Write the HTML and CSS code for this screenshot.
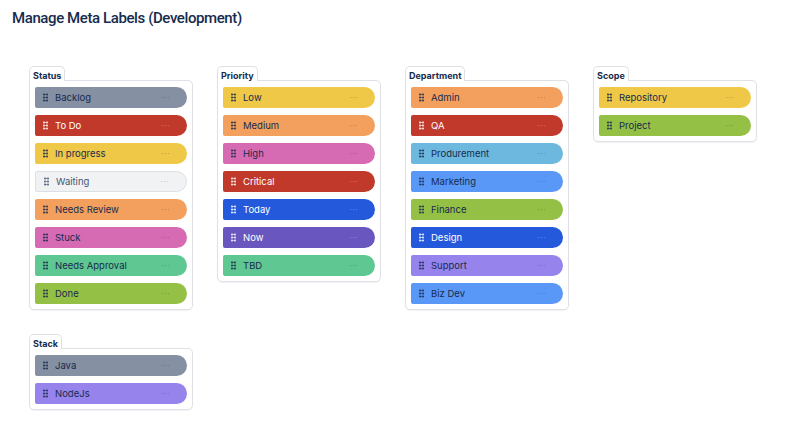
FILE: index.html
```html
<!DOCTYPE html>
<html lang="en">
<head>
  <meta charset="UTF-8">
  <meta name="viewport" content="width=device-width, initial-scale=1.0">
  <title>Manage Meta Labels</title>
  <link rel="stylesheet" href="styles.css">
</head>
<body>

<div class="page">
  <h1 class="page-title">Manage Meta Labels (Development)</h1>

  <div class="groups">

    <!-- Status -->
    <section class="group">
      <div class="group-tab">Status</div>
      <div class="group-card">
        <div class="label gray"><span class="grip"></span><span class="name">Backlog</span><span class="more">···</span></div>
        <div class="label red"><span class="grip"></span><span class="name">To Do</span><span class="more">···</span></div>
        <div class="label yellow"><span class="grip"></span><span class="name">In progress</span><span class="more">···</span></div>
        <div class="label light"><span class="grip"></span><span class="name">Waiting</span><span class="more">···</span></div>
        <div class="label orange"><span class="grip"></span><span class="name">Needs Review</span><span class="more">···</span></div>
        <div class="label magenta"><span class="grip"></span><span class="name">Stuck</span><span class="more">···</span></div>
        <div class="label green"><span class="grip"></span><span class="name">Needs Approval</span><span class="more">···</span></div>
        <div class="label lime"><span class="grip"></span><span class="name">Done</span><span class="more">···</span></div>
      </div>
    </section>

    <!-- Priority -->
    <section class="group">
      <div class="group-tab">Priority</div>
      <div class="group-card">
        <div class="label yellow"><span class="grip"></span><span class="name">Low</span><span class="more">···</span></div>
        <div class="label orange"><span class="grip"></span><span class="name">Medium</span><span class="more">···</span></div>
        <div class="label magenta"><span class="grip"></span><span class="name">High</span><span class="more">···</span></div>
        <div class="label red"><span class="grip"></span><span class="name">Critical</span><span class="more">···</span></div>
        <div class="label blue"><span class="grip"></span><span class="name">Today</span><span class="more">···</span></div>
        <div class="label purple"><span class="grip"></span><span class="name">Now</span><span class="more">···</span></div>
        <div class="label green"><span class="grip"></span><span class="name">TBD</span><span class="more">···</span></div>
      </div>
    </section>

    <!-- Department -->
    <section class="group">
      <div class="group-tab">Department</div>
      <div class="group-card">
        <div class="label orange"><span class="grip"></span><span class="name">Admin</span><span class="more">···</span></div>
        <div class="label red"><span class="grip"></span><span class="name">QA</span><span class="more">···</span></div>
        <div class="label teal"><span class="grip"></span><span class="name">Produrement</span><span class="more">···</span></div>
        <div class="label sky"><span class="grip"></span><span class="name">Marketing</span><span class="more">···</span></div>
        <div class="label lime"><span class="grip"></span><span class="name">Finance</span><span class="more">···</span></div>
        <div class="label blue"><span class="grip"></span><span class="name">Design</span><span class="more">···</span></div>
        <div class="label lavender"><span class="grip"></span><span class="name">Support</span><span class="more">···</span></div>
        <div class="label sky"><span class="grip"></span><span class="name">Biz Dev</span><span class="more">···</span></div>
      </div>
    </section>

    <!-- Scope -->
    <section class="group">
      <div class="group-tab">Scope</div>
      <div class="group-card">
        <div class="label yellow"><span class="grip"></span><span class="name">Repository</span><span class="more">···</span></div>
        <div class="label lime"><span class="grip"></span><span class="name">Project</span><span class="more">···</span></div>
      </div>
    </section>

    <!-- Stack -->
    <section class="group">
      <div class="group-tab">Stack</div>
      <div class="group-card">
        <div class="label gray"><span class="grip"></span><span class="name">Java</span><span class="more">···</span></div>
        <div class="label lavender"><span class="grip"></span><span class="name">NodeJs</span><span class="more">···</span></div>
      </div>
    </section>

  </div>
</div>

</body>
</html>
```

FILE: styles.css
```css
body {
  margin: 0;
  font-family: 'Inter', 'Liberation Sans', sans-serif;
  color: #172B4D;
  background: #ffffff;
}

.page {
  padding: 9px 12px;
}

.page-title {
  margin: 0;
  font-family: 'Roboto', 'Inter', sans-serif;
  font-size: 15px;
  line-height: 18px;
  font-weight: 500;
  letter-spacing: -0.4px;
  color: #172B4D;
}

.groups {
  display: grid;
  grid-template-columns: repeat(4, 164px);
  column-gap: 24px;
  row-gap: 24px;
  align-items: start;
  margin-top: 39px;
  padding-left: 17px;
}

.group {
  display: flex;
  flex-direction: column;
  align-items: flex-start;
}

.group-tab {
  position: relative;
  z-index: 1;
  height: 15px;
  box-sizing: border-box;
  margin-bottom: -1px;
  padding: 3px 3px 0;
  font-size: 9px;
  line-height: 11px;
  font-weight: 700;
  background: #ffffff;
  border: 1px solid #DFE1E6;
  border-bottom: none;
  border-radius: 5px 5px 0 0;
}

.group-card {
  align-self: stretch;
  display: flex;
  flex-direction: column;
  gap: 7px;
  padding: 6px 5px 5px;
  border: 1px solid #DFE1E6;
  border-radius: 0 5px 5px 5px;
  box-shadow: 0 1px 1px rgba(9, 30, 66, 0.06);
}

.label {
  display: flex;
  align-items: center;
  height: 21px;
  box-sizing: border-box;
  padding: 0 17px 0 8px;
  border-radius: 2px 11px 11px 2px;
  font-size: 9.5px;
  color: #172B4D;
}

.grip {
  width: 5px;
  height: 9px;
  margin-right: 7px;
  background-image: radial-gradient(circle, currentColor 0.9px, transparent 1.15px);
  background-size: 3px 3px;
  background-position: -0.5px 0;
  flex-shrink: 0;
}

.name {
  flex: 1;
}

.more {
  font-size: 9px;
  letter-spacing: 0.3px;
  opacity: 0.25;
}

/* palette */
.gray { background: #8590A2; }
.red { background: #C0392B; color: #ffffff; }
.yellow { background: #EEC846; }
.light { background: #F1F2F4; border: 1px solid #DCDFE4; color: #44546F; }
.orange { background: #F3A05E; }
.magenta { background: #D66AB3; }
.green { background: #5FC791; }
.lime { background: #95C046; }
.blue { background: #2459DC; color: #ffffff; }
.purple { background: #6A56BF; color: #ffffff; }
.teal { background: #6DB8DF; }
.sky { background: #5A98F8; }
.lavender { background: #9684EC; }
```
